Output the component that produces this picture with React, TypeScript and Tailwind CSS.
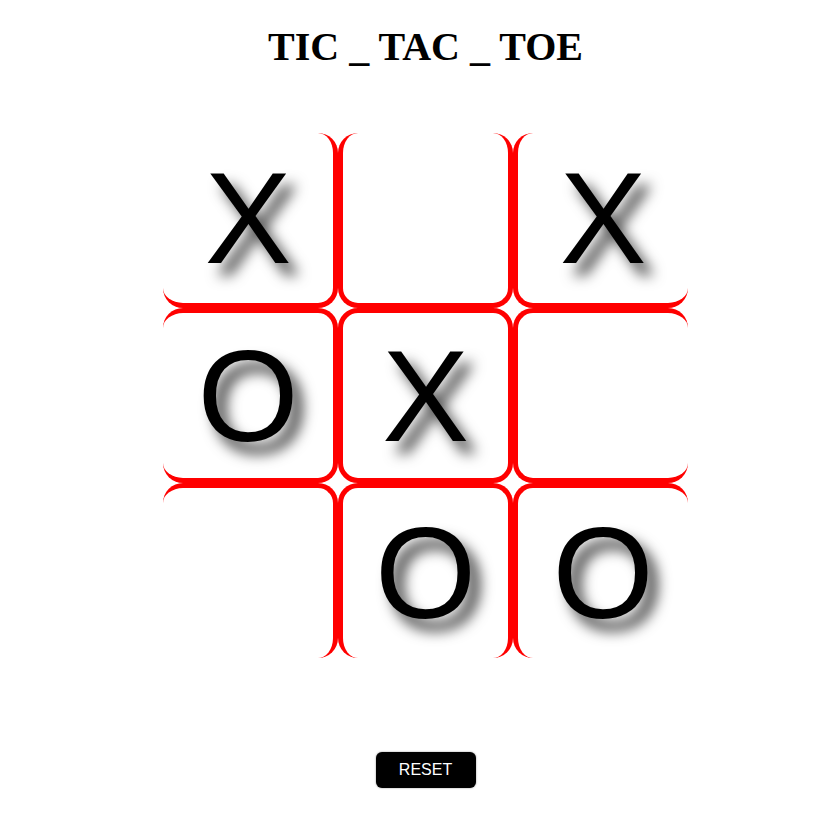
import React, { useState } from "react";

type Mark = "X" | "O" | "";

const borders = [
  "border-r-[5px] border-b-[5px]",
  "border-l-[5px] border-r-[5px] border-b-[5px]",
  "border-l-[5px] border-b-[5px]",
  "border-t-[5px] border-r-[5px] border-b-[5px]",
  "border-[5px]",
  "border-t-[5px] border-l-[5px] border-b-[5px]",
  "border-t-[5px] border-r-[5px]",
  "border-t-[5px] border-l-[5px] border-r-[5px]",
  "border-t-[5px] border-l-[5px]",
];

const initial: Mark[] = ["X", "", "X", "O", "X", "", "", "O", "O"];

export default function App() {
  const [board, setBoard] = useState<Mark[]>(initial);

  return (
    <div className="min-h-screen bg-white pl-[22px] flex flex-col items-center">
      <h1 className="mt-[24px] text-[40px] font-bold leading-[46px] text-black font-['Liberation_Serif',serif]">
        TIC _ TAC _ TOE
      </h1>

      <div className="mt-[63px] grid grid-cols-3 w-[525px]">
        {board.map((mark, i) => (
          <div
            key={i}
            className={`h-[175px] w-[175px] rounded-[20px] border-solid border-[#ff0000] flex items-center justify-center ${borders[i]}`}
          >
            <span className="text-[130px] leading-none text-black font-['Liberation_Sans',Arial,sans-serif] [text-shadow:10px_12px_14px_#444]">
              {mark}
            </span>
          </div>
        ))}
      </div>

      <button
        onClick={() => setBoard(Array(9).fill(""))}
        className="mt-[94px] w-[100px] h-[36px] rounded-md bg-black text-white text-base font-['Liberation_Sans',Arial,sans-serif] shadow-[0_0_2px_#888]"
      >
        RESET
      </button>
    </div>
  );
}
